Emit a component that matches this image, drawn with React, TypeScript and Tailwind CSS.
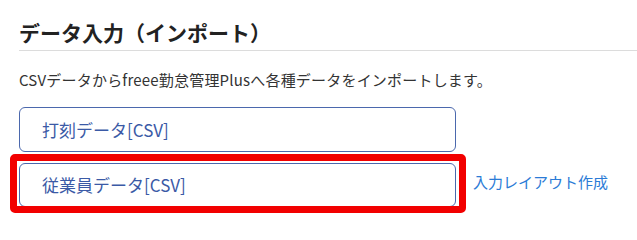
export default function App() {
  return (
    <div
      className="w-[637px] h-[215px] bg-white pl-[19px] pt-[17px] overflow-hidden"
      style={{ fontFamily: '"Noto Sans CJK JP", "Noto Sans", sans-serif' }}
    >
      {/* heading */}
      <h2 className="text-[21px] font-bold leading-[30px] text-[#222] pb-[3px] border-b border-[#dcdcdc]">
        データ入力（インポート）
      </h2>
      <p className="mt-[19px] text-[15px] leading-[20px] text-[#333] tracking-[0.2px]">
        CSVデータからfreee勤怠管理Plusへ各種データをインポートします。
      </p>

      {/* import buttons */}
      <div className="mt-[17px] flex flex-col gap-[11px]">
        <div className="flex items-center">
          <button className="w-[437px] h-[45px] border border-[#4b68ad] rounded-[6px] text-left pl-[22px] text-[17px] text-[#3b5aa6] bg-white">
            打刻データ[CSV]
          </button>
        </div>
        <div className="flex items-center">
          <div className="relative">
            <button className="w-[437px] h-[44px] border border-[#4b68ad] rounded-[6px] text-left pl-[22px] text-[17px] text-[#3b5aa6] bg-white">
              従業員データ[CSV]
            </button>
            {/* highlight frame */}
            <span className="absolute -left-[9px] -right-[10px] -top-[9px] -bottom-[6px] border-[7px] border-[#f20000] rounded-[5px] pointer-events-none" />
          </div>
          <a className="ml-[17px] -mt-[5px] text-[15px] text-[#2b7bd6] cursor-pointer">
            入力レイアウト作成
          </a>
        </div>
      </div>
    </div>
  );
}
